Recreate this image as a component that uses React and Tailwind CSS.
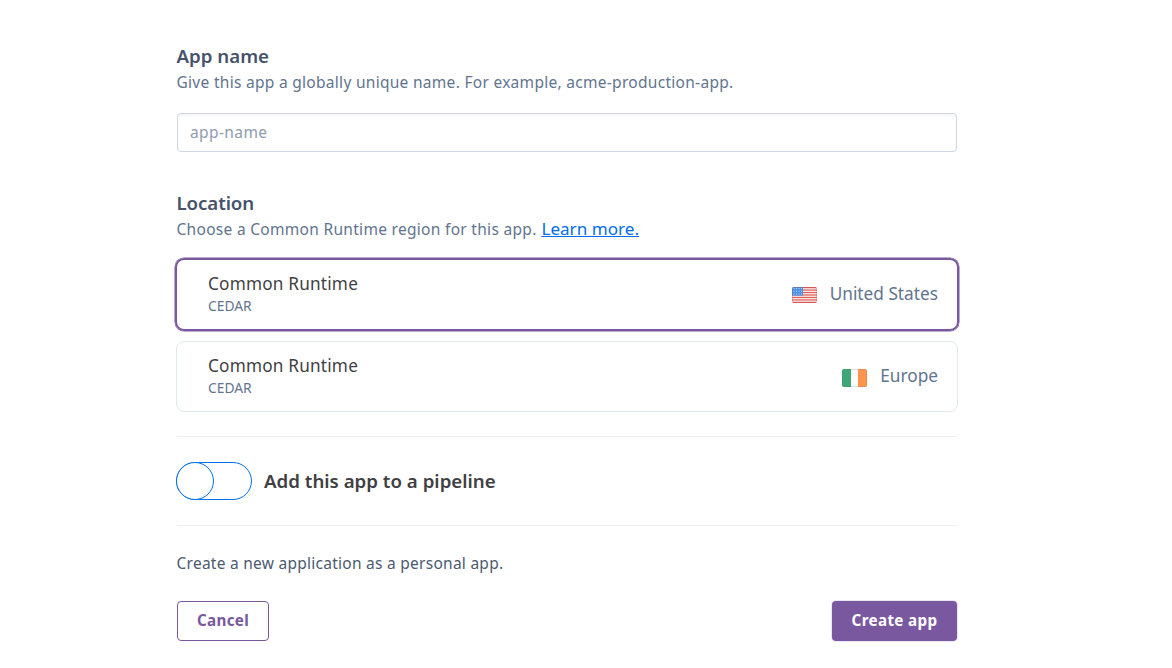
import React from "react";

const regions = [
  { name: "United States", flag: "us", selected: true },
  { name: "Europe", flag: "ie", selected: false },
];

function UsFlag() {
  return (
    <svg width="25" height="16" viewBox="0 0 25 16" className="mt-[3px]">
      <defs>
        <clipPath id="us">
          <rect width="25" height="16" rx="2" />
        </clipPath>
      </defs>
      <g clipPath="url(#us)">
        <rect width="25" height="16" fill="#fbf3f2" />
        {[0, 1, 2, 3, 4, 5, 6].map((i) => (
          <rect key={i} y={i * 2.46} width="25" height="1.25" fill="#e0605c" />
        ))}
        <rect width="11" height="8.6" fill="#4a90e8" />
        {[1.5, 4.2, 6.9].map((y) =>
          [1.5, 4, 6.5, 9].map((x) => (
            <rect key={`${x}-${y}`} x={x} y={y - 0.4} width="1" height="1" fill="#c4dcf8" />
          ))
        )}
        <rect x="0.5" y="0.5" width="24" height="15" rx="1.5" fill="none" stroke="#a33" strokeOpacity="0.2" />
      </g>
    </svg>
  );
}

function IeFlag() {
  return (
    <svg width="25" height="18" viewBox="0 0 25 18" className="mt-[5px]">
      <defs>
        <clipPath id="ie">
          <rect width="25" height="18" rx="2" />
        </clipPath>
      </defs>
      <g clipPath="url(#ie)">
        <rect width="25" height="18" fill="#fcfcfc" />
        <rect width="9" height="18" fill="#3ea777" />
        <rect x="16" width="9" height="18" fill="#ff944f" />
        <rect x="0.5" y="0.5" width="24" height="17" rx="1.5" fill="none" stroke="#555" strokeOpacity="0.16" />
      </g>
    </svg>
  );
}

function RegionCard({ region }) {
  return (
    <div
      className={
        region.selected
          ? "-mx-0.5 flex h-[73px] items-center justify-between rounded-[9px] border-2 border-[#79589f] pb-0.5 pl-[31px] pr-[19px] shadow-[0_0_0_0.5px_#79589f]"
          : "-mx-px flex h-[71px] items-center justify-between rounded-lg border border-[#e3e8f0] pb-0.5 pl-[31px] pr-[19px]"
      }
    >
      <div className="flex flex-col">
        <span className="text-[17.2px] leading-[23px] tracking-[0.2px] text-[#3f3f44]">Common Runtime</span>
        <span className="text-[13.8px] leading-[21px] text-[#62748e]">CEDAR</span>
      </div>
      <div className="flex items-center gap-[13px]">
        {region.flag === "us" ? <UsFlag /> : <IeFlag />}
        <span className="text-[17.25px] leading-6 text-[#62748e]">{region.name}</span>
      </div>
    </div>
  );
}

export default function App() {
  return (
    <main className="flex h-[668px] w-[1172px] flex-col overflow-hidden bg-white pl-[177px] pr-[215px] pt-[43px] font-['Noto_Sans',sans-serif]">
      <section>
        <h2 className="-ml-[0.5px] text-[18.7px] font-semibold leading-[26px] text-[#46536b]">App name</h2>
        <p className="-ml-[0.5px] text-[15.5px] leading-[26px] tracking-[0.29px] text-[#62748e]">
          Give this app a globally unique name. For example, acme-production-app.
        </p>
        <input
          placeholder="app-name"
          className="mt-[18px] block h-[39px] w-full rounded border border-[#cfd7e6] px-3 pb-0.5 text-[15.5px] tracking-[0.4px] shadow-[inset_0_2px_2px_#f4f5f9] outline-none placeholder:text-[#8e9bb0]"
        />
      </section>

      <section className="mt-[38px]">
        <h2 className="-ml-[0.5px] text-[18.7px] font-semibold leading-[26px] tracking-[-0.1px] text-[#46536b]">Location</h2>
        <p className="-ml-[0.5px] text-[15.5px] leading-[26px] tracking-[0.3px] text-[#62748e]">
          Choose a Common Runtime region for this app.{" "}
          <a href="#learn" className="ml-[0.5px] text-[17.1px] leading-none tracking-[0px] text-[#006deb] underline">
            Learn more.
          </a>
        </p>
        <div className="mt-4 flex flex-col gap-2.5">
          {regions.map((r) => (
            <RegionCard key={r.name} region={r} />
          ))}
        </div>
      </section>

      <section className="mt-6 flex h-[90px] items-center border-y border-[#efeff1]">
        <button
          role="switch"
          aria-checked="false"
          aria-label="Add this app to a pipeline"
          className="-ml-px flex h-[38px] w-[76px] rounded-full border border-[#0070e8]"
        >
          <span className="-ml-px -mt-px size-[38px] rounded-full border border-[#0070e8] bg-white" />
        </button>
        <span className="ml-3 text-[18.7px] font-semibold leading-[26px] text-[#3f3f44]">
          Add this app to a pipeline
        </span>
      </section>

      <p className="-ml-[0.5px] mt-6 text-[15.5px] leading-[26px] tracking-[0.26px] text-[#4c596f]">
        Create a new application as a personal app.
      </p>

      <footer className="mt-[25px] flex items-center justify-between">
        <button className="h-10 w-[92px] rounded border border-[#79589f] pb-0.5 text-[15.2px] font-bold tracking-[0.35px] text-[#79589f]">
          Cancel
        </button>
        <button className="h-10 w-[125px] rounded bg-[#79589f] pb-0.5 text-[15.2px] font-bold tracking-[0.35px] text-white shadow-[0_0_0_1px_#e9e6f3]">
          Create app
        </button>
      </footer>
    </main>
  );
}
